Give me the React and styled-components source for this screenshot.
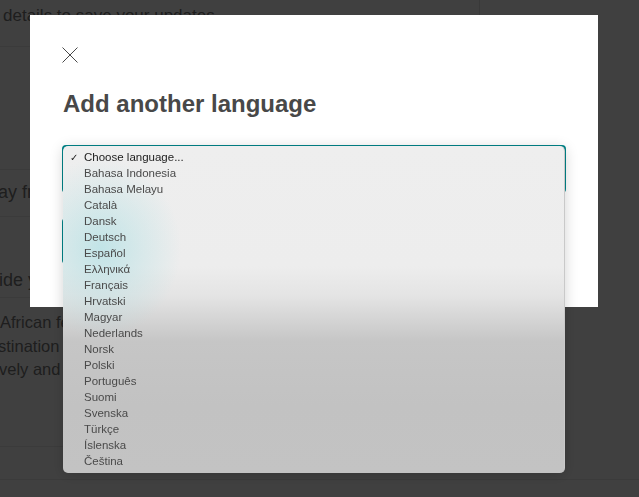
import React from 'react';
import styled, { createGlobalStyle } from 'styled-components';

const languages = [
  'Bahasa Indonesia',
  'Bahasa Melayu',
  'Català',
  'Dansk',
  'Deutsch',
  'Español',
  'Ελληνικά',
  'Français',
  'Hrvatski',
  'Magyar',
  'Nederlands',
  'Norsk',
  'Polski',
  'Português',
  'Suomi',
  'Svenska',
  'Türkçe',
  'Íslenska',
  'Čeština',
];

const GlobalStyle = createGlobalStyle`
  html, body {
    margin: 0;
    padding: 0;
    background: #fff;
    overflow: hidden;
  }
  * {
    box-sizing: border-box;
  }
`;

const App = () => (
  <>
    <GlobalStyle />
    <Page>
      <Header>
        <Banner>details to save your updates</Banner>
        <div />
      </Header>
      <Main>
        <Section height={123} />
        <Section height={47}>
          <Line size={18} shift={-2}>ay from home</Line>
        </Section>
        <Section height={81} align="flex-end">
          <Line size={18} shift={-1} pad={5}>ide your guests</Line>
        </Section>
        <Section height={149} align="flex-start">
          <Paragraph>
            <Line size={16.5}>African feel</Line>
            <Line size={16.5} shift={-2}>stination</Line>
            <Line size={16.5} shift={-1}>vely and t</Line>
          </Paragraph>
        </Section>
      </Main>
      <Footer />
    </Page>

    <Overlay>
      <Modal>
        <CloseButton aria-label="Close">
          <svg width="16" height="16" viewBox="0 0 16 16">
            <path d="M0.5 0.5 L15.5 15.5 M15.5 0.5 L0.5 15.5" stroke="#484848" strokeWidth="1" fill="none" />
          </svg>
        </CloseButton>
        <Title>Add another language</Title>
        <SelectWrap>
          <SelectBox />
          <Popup>
            <Option selected>
              <Check>✓</Check>
              Choose language...
            </Option>
            {languages.map((lang) => (
              <Option key={lang}>
                <Check />
                {lang}
              </Option>
            ))}
          </Popup>
        </SelectWrap>
        <AddButton>Add</AddButton>
      </Modal>
    </Overlay>
  </>
);

const Page = styled.div`
  width: 639px;
  height: 497px;
  display: flex;
  flex-direction: column;
  font-family: "Liberation Sans", Arial, sans-serif;
  color: #787878;
  overflow: hidden;
`;

const Header = styled.div`
  display: grid;
  grid-template-columns: 480px 1fr;
  height: 47px;
`;

const Banner = styled.div`
  padding: 6px 0 0 3px;
  font-size: 17px;
  line-height: 20px;
  border-bottom: 1px solid #ebebeb;
  border-right: 1px solid #e4e4e4;
  white-space: nowrap;
  overflow: hidden;
`;

const Main = styled.div`
  width: 480px;
  display: flex;
  flex-direction: column;
`;

const Section = styled.div`
  height: ${(p) => p.height}px;
  display: flex;
  flex-direction: column;
  justify-content: ${(p) => p.align || 'center'};
  border-bottom: 1px solid #ebebeb;
`;

const Footer = styled.div`
  height: 33px;
  border-bottom: 1px solid #ebebeb;
`;

const Paragraph = styled.div`
  display: flex;
  flex-direction: column;
  padding-top: 13px;
`;

const Line = styled.div`
  font-size: ${(p) => p.size}px;
  line-height: 23.5px;
  margin-left: ${(p) => p.shift || 0}px;
  padding-bottom: ${(p) => p.pad || 0}px;
  white-space: nowrap;
`;

const Overlay = styled.div`
  position: fixed;
  inset: 0;
  background: rgba(0, 0, 0, 0.75);
  padding: 15px 41px 0 30px;
`;

const Modal = styled.div`
  width: 568px;
  height: 292px;
  background: #fff;
  padding: 32px 32px 0 32px;
  display: flex;
  flex-direction: column;
  align-items: flex-start;
`;

const CloseButton = styled.button`
  border: 0;
  padding: 0;
  background: none;
  width: 16px;
  height: 16px;
  display: block;
  cursor: pointer;

  svg {
    display: block;
  }
`;

const Title = styled.h1`
  margin: 26px 0 0 1px;
  font-family: "Liberation Sans", Arial, sans-serif;
  font-weight: 700;
  font-size: 24px;
  line-height: 30px;
  color: #484848;
`;

const SelectWrap = styled.div`
  position: relative;
  margin-top: 26px;
  width: 504px;
`;

const SelectBox = styled.div`
  height: 48px;
  border: 2px solid #008489;
  border-radius: 4px;
  background: #fff;
`;

const Popup = styled.div`
  position: absolute;
  top: 1px;
  left: 1px;
  right: 1px;
  height: 327px;
  padding: 3px 0;
  border-radius: 5px;
  border-right: 1px solid #c9c9c9;
  overflow: hidden;
  background:
    radial-gradient(ellipse 80px 90px at 38px 102px, rgba(175, 224, 228, 0.7), rgba(200, 230, 232, 0) 100%),
    linear-gradient(to bottom, #eeeeee 0, #ededed 120px, #e4e4e4 150px, #c6c6c6 195px, #c2c2c2 260px, #c3c3c3 100%);
  box-shadow: 0 2px 14px rgba(0, 0, 0, 0.18);
  font-family: "Liberation Sans", Arial, sans-serif;
`;

const Option = styled.div`
  display: flex;
  align-items: center;
  height: 16px;
  padding-left: 7px;
  font-size: 11.5px;
  color: ${(p) => (p.selected ? '#1c1c1c' : '#4a4a4a')};
  white-space: nowrap;
`;

const Check = styled.span`
  width: 14px;
  font-size: 10px;
  color: #222;
`;

const AddButton = styled.button`
  margin-top: 25px;
  height: 46px;
  padding: 0 24px;
  border: 0;
  border-radius: 4px;
  background: #008489;
  color: #fff;
  font-family: "Liberation Sans", Arial, sans-serif;
  font-size: 16px;
  font-weight: 700;
`;

export default App;
